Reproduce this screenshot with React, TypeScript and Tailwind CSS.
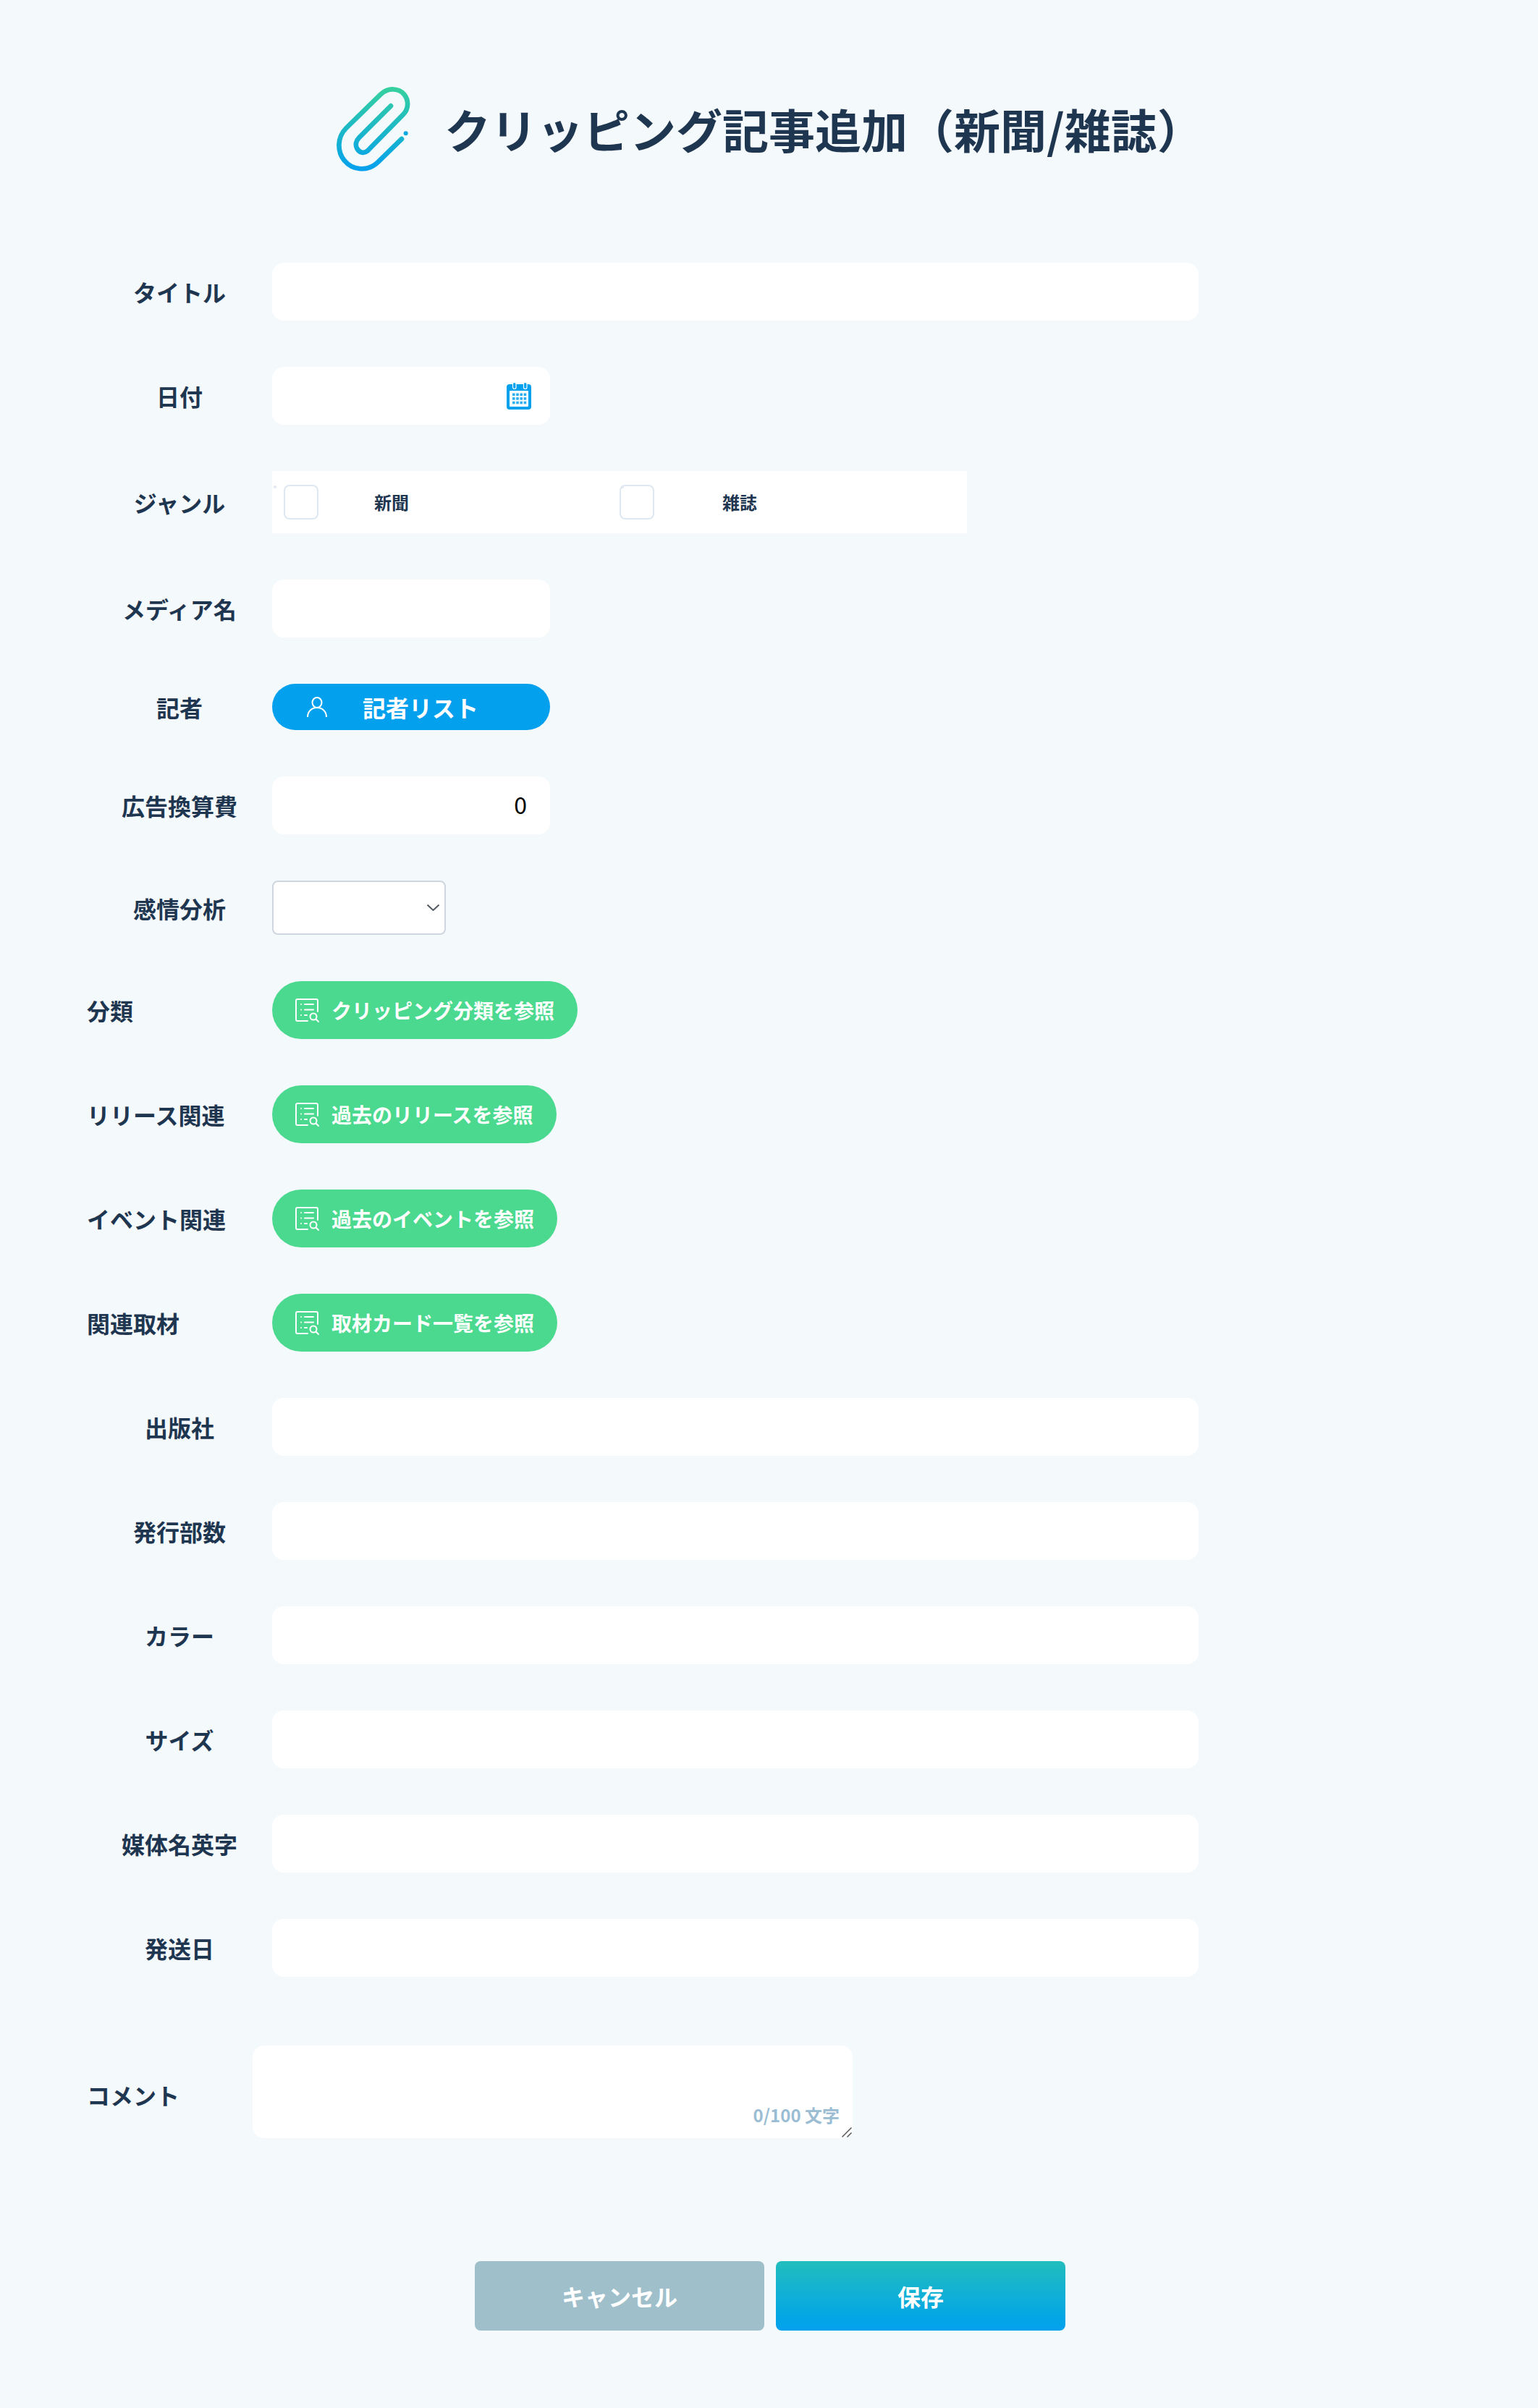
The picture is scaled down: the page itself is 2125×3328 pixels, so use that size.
import React from "react"

const font = { fontFamily: '"Noto Sans CJK JP", "Noto Sans", sans-serif' }

function ClipIcon() {
  return (
    <svg width="150" height="150" viewBox="0 0 450 450" fill="none" className="shrink-0 -my-[17px] -ml-[25px]">
      <defs>
        <linearGradient id="clip" gradientUnits="userSpaceOnUse" x1="0" y1="60" x2="0" y2="400">
          <stop offset="0" stopColor="#36d0a0" />
          <stop offset="1" stopColor="#03a0ee" />
        </linearGradient>
      </defs>
      <path
        d="M345 270 L248 365 C205 408 140 400 108 360 C78 325 75 265 115 225 L258 85 C290 55 335 60 355 85 C375 110 375 145 350 170 L205 318 C190 332 170 328 160 310 C152 295 155 278 168 265 L300 133"
        stroke="url(#clip)"
        strokeWidth="20"
        strokeLinecap="round"
        strokeLinejoin="round"
      />
      <circle cx="362" cy="247" r="9" fill="#0fa8e0" />
    </svg>
  )
}

function CalendarIcon() {
  const cells = []
  for (let r = 0; r < 3; r++) {
    for (let c = 0; c < 4; c++) {
      cells.push(<rect key={`${r}-${c}`} x={8 + c * 5.2} y={15.5 + r * 5.6} width="3.6" height="3.6" fill="#2aaef0" />)
    }
  }
  return (
    <svg width="34" height="38" viewBox="0 0 34 38" fill="none">
      <rect x="0" y="3" width="34" height="35" rx="4" fill="#03a0ee" />
      <rect x="4" y="12" width="26" height="22" rx="1" fill="#fff" />
      {cells}
      <rect x="8.5" y="0.5" width="4.5" height="9" rx="2.25" fill="#03a0ee" stroke="#fff" strokeWidth="1.2" />
      <rect x="23.5" y="0.5" width="4.5" height="9" rx="2.25" fill="#03a0ee" stroke="#fff" strokeWidth="1.2" />
    </svg>
  )
}

function UserIcon() {
  return (
    <svg width="28" height="28" viewBox="0 0 28 28" fill="none" stroke="#fff" strokeWidth="2">
      <ellipse cx="14" cy="8" rx="6.5" ry="7" />
      <path d="M1 28C1 20 7 15 14 15C21 15 27 20 27 28" />
    </svg>
  )
}

function ListSearchIcon() {
  return (
    <svg width="33" height="33" viewBox="0 0 33 33" fill="none" stroke="#fff" strokeWidth="2" strokeLinecap="round" className="shrink-0">
      <path d="M17 31H3a2 2 0 0 1-2-2V3a2 2 0 0 1 2-2h26a2 2 0 0 1 2 2v15" />
      <path d="M8 8h.01M13 8h12M8 15.5h.01M13 15.5h12M8 23h.01M13 23h3" />
      <circle cx="25" cy="25" r="4.5" />
      <path d="M28.5 28.5L32 32" />
    </svg>
  )
}

function Row({ label, left, children }: { label: string; left?: boolean; children: React.ReactNode }) {
  return (
    <div className="flex items-center">
      <div className={`w-[256px] shrink-0 text-[32px] leading-none font-bold text-[#1f3650] ${left ? "text-left" : "text-center"}`}>
        {label}
      </div>
      {children}
    </div>
  )
}

function TextRow({ label }: { label: string }) {
  return (
    <Row label={label}>
      <input type="text" className="w-[1280px] h-20 rounded-2xl bg-white outline-none px-8 text-[32px]" />
    </Row>
  )
}

function BrowseRow({ label, text }: { label: string; text: string }) {
  return (
    <Row label={label} left>
      <button className="flex items-center gap-[17px] h-20 px-8 rounded-full bg-[#4ad98e] text-white text-[28px] font-bold">
        <ListSearchIcon />
        {text}
      </button>
    </Row>
  )
}

export default function App() {
  return (
    <div style={font} className="min-h-[3328px] bg-[#f4f9fc] pt-[119px] pl-[120px] pb-[107px]">
      {/* Heading */}
      <div className="flex items-center pl-[345px] h-[116px]">
        <ClipIcon />
        <h1 className="ml-6 text-[64px] leading-none font-bold text-[#1f3650] whitespace-nowrap">
          クリッピング記事追加（新聞/雑誌）
        </h1>
      </div>

      <div className="flex flex-col gap-16 mt-32">
        <TextRow label="タイトル" />

        <Row label="日付">
          <div className="flex items-center justify-end w-[384px] h-20 pr-[26px] rounded-2xl bg-white">
            <CalendarIcon />
          </div>
        </Row>

        <Row label="ジャンル">
          <div className="grid grid-cols-2 w-[960px] h-[86px] bg-white text-[24px] font-bold text-[#1f3650]">
            <label className="relative flex items-center pl-4">
              <span className="absolute left-0.5 top-5 w-1 h-1 rounded-full bg-[#e2e8f0]" />
              <span className="w-12 h-12 rounded-lg border-2 border-[#dfe7f0] bg-white" />
              <span className="ml-[77px]">新聞</span>
            </label>
            <label className="relative flex items-center">
              <span className="absolute left-0.5 top-5 w-1 h-1 rounded-full bg-[#e2e8f0]" />
              <span className="w-12 h-12 rounded-lg border-2 border-[#dfe7f0] bg-white" />
              <span className="ml-[94px]">雑誌</span>
            </label>
          </div>
        </Row>

        <Row label="メディア名">
          <input type="text" className="w-[384px] h-20 rounded-2xl bg-white outline-none px-8 text-[32px]" />
        </Row>

        <Row label="記者">
          <button className="flex items-center w-[384px] h-16 pl-12 rounded-full bg-[#03a0ee] text-white text-[32px] font-bold">
            <UserIcon />
            <span className="ml-[49px]">記者リスト</span>
          </button>
        </Row>

        <Row label="広告換算費">
          <input
            type="text"
            defaultValue="0"
            className="w-[384px] h-20 rounded-2xl bg-white outline-none pl-8 pr-8 pb-1 text-right text-[32px] text-black"
          />
        </Row>

        <Row label="感情分析">
          <div className="relative">
            <select className="block appearance-none w-[240px] h-[75px] rounded-lg border-2 border-[#cfd6e0] bg-white text-[28px]" />
            <svg width="17" height="9" viewBox="0 0 17 9" fill="none" stroke="#555b63" strokeWidth="2" className="absolute right-[9px] top-[33px] pointer-events-none">
              <path d="M0.5 0.5L8.5 8L16.5 0.5" />
            </svg>
          </div>
        </Row>

        <BrowseRow label="分類" text="クリッピング分類を参照" />
        <BrowseRow label="リリース関連" text="過去のリリースを参照" />
        <BrowseRow label="イベント関連" text="過去のイベントを参照" />
        <BrowseRow label="関連取材" text="取材カード一覧を参照" />

        <TextRow label="出版社" />
        <TextRow label="発行部数" />
        <TextRow label="カラー" />
        <TextRow label="サイズ" />
        <TextRow label="媒体名英字" />
        <TextRow label="発送日" />
      </div>

      {/* Comment */}
      <div className="flex items-center mt-[95px]">
        <div className="w-[229px] shrink-0 pt-2 text-[32px] leading-none font-bold text-[#1f3650]">コメント</div>
        <div className="relative flex">
          <textarea className="block resize-none w-[829px] h-32 rounded-2xl bg-white outline-none p-4 text-[28px]" />
          <span className="absolute right-[18px] bottom-5 text-[24px] leading-none font-bold text-[#9bbdd4]">0/100 文字</span>
          <svg width="14" height="14" viewBox="0 0 14 14" fill="none" stroke="#5a5a5a" strokeWidth="1.5" className="absolute right-[1px] bottom-[1px] pointer-events-none">
            <path d="M0.5 13.5L13.5 0.5M7.5 13.5L13.5 7.5" />
          </svg>
        </div>
      </div>

      {/* Actions */}
      <div className="flex gap-4 mt-[170px] pl-[536px]">
        <button className="w-[400px] h-24 rounded-lg bg-[#9fbfcb] text-white text-[32px] font-bold">キャンセル</button>
        <button className="w-[400px] h-24 rounded-lg bg-gradient-to-b from-[#22bdbd] to-[#03a0ee] text-white text-[32px] font-bold">
          保存
        </button>
      </div>
    </div>
  )
}
